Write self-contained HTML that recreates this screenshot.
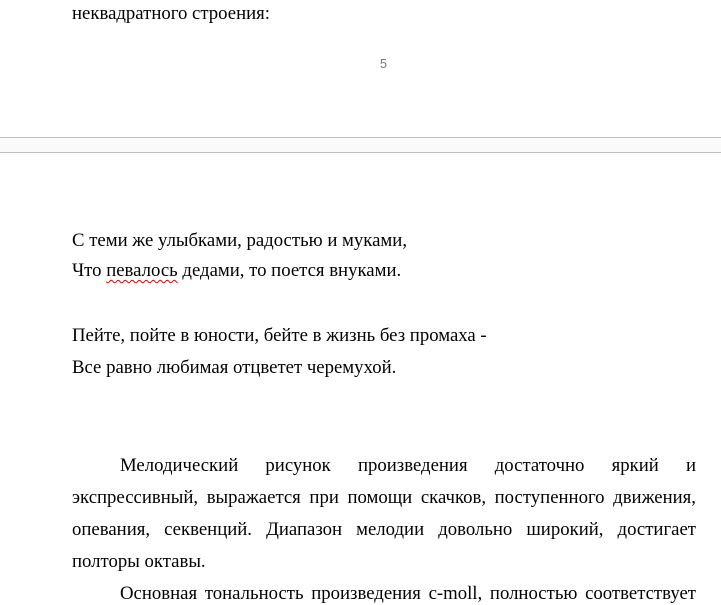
<!DOCTYPE html>
<html><head><meta charset="utf-8"><style>
body{margin:0;width:721px;height:601px;background:#fff;position:relative;overflow:hidden;font-family:"Liberation Serif",serif;font-size:18.75px;color:#000}
.l{position:absolute;left:72px;white-space:nowrap;line-height:22px}
.j{position:absolute;left:72px;width:624px;text-align:justify;text-align-last:justify;white-space:nowrap;line-height:22px}
.band{position:absolute;left:0;width:721px;top:137px;height:14px;background:#fafafa;border-top:1px solid #c0c0c0;border-bottom:1px solid #c0c0c0}
.pn{position:absolute;left:380px;top:57px;font-family:"Liberation Sans",sans-serif;font-size:12.5px;color:#777}
.sq{text-decoration:underline wavy #d00;text-decoration-thickness:1px;text-underline-offset:3px}
</style></head><body>
<div class="l" style="top:3px">неквадратного строения:</div>
<div class="pn">5</div>
<div class="band"></div>
<div class="l" style="top:230px">С теми же улыбками, радостью и муками,</div>
<div class="l" style="top:260px">Что <span class="sq">певалось</span> дедами, то поется внуками.</div>
<div class="l" style="top:325px">Пейте, пойте в юности, бейте в жизнь без промаха -</div>
<div class="l" style="top:357px">Все равно любимая отцветет черемухой.</div>
<div class="j" style="top:455px;left:120px;width:576px">Мелодический рисунок произведения достаточно яркий и</div>
<div class="j" style="top:487px">экспрессивный, выражается при помощи скачков, поступенного движения,</div>
<div class="j" style="top:519px">опевания, секвенций. Диапазон мелодии довольно широкий, достигает</div>
<div class="l" style="top:551px">полторы октавы.</div>
<div class="j" style="top:583px;left:120px;width:576px">Основная тональность произведения c-moll, полностью соответствует</div>
</body></html>
